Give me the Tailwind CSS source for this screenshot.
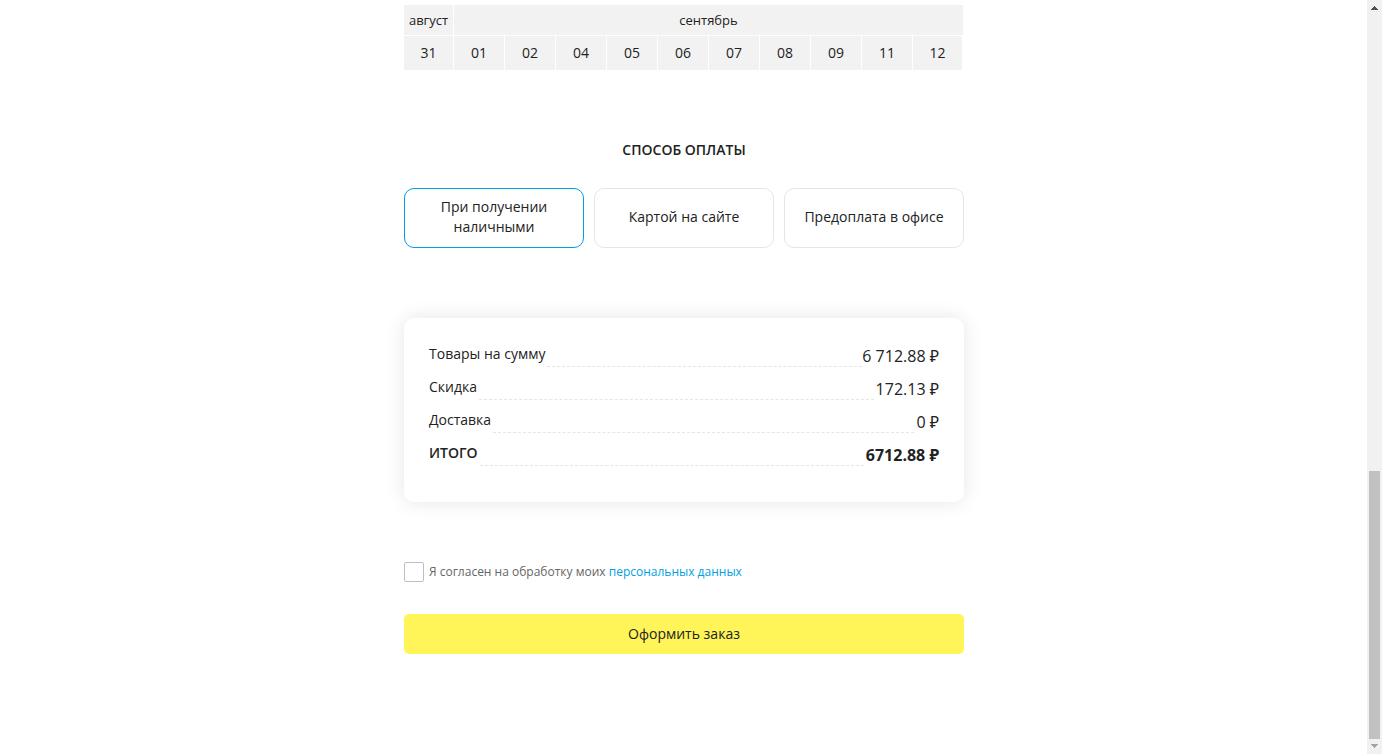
<!DOCTYPE html>
<html lang="ru">
<head>
<meta charset="utf-8">
<meta name="viewport" content="width=device-width, initial-scale=1">
<title>Оформление заказа</title>
<script src="https://cdn.jsdelivr.net/npm/@tailwindcss/browser@4"></script>
</head>
<body class="flex min-h-screen bg-white font-['Open_Sans','Noto_Sans',sans-serif] text-sm text-[#222]">
<main class="min-w-0 flex-1 pl-px">
<form class="mx-auto max-w-[560px] pt-[5px] pb-24">
  <table class="w-full table-fixed border-separate border-spacing-0 text-center">
    <colgroup><col class="w-[50px]"><col span="10"></colgroup>
    <thead>
      <tr class="h-[31px] text-[13px] leading-5">
        <th class="border-r border-b border-white bg-[#f2f2f2] p-0 font-normal">август</th>
        <th colspan="10" class="border-r border-b border-white bg-[#f2f2f2] p-0 font-normal">сентябрь</th>
      </tr>
    </thead>
    <tbody>
      <tr class="h-[34px]">
        <td class="border-r border-white bg-[#f2f2f2] p-0">31</td>
        <td class="border-r border-white bg-[#f2f2f2] p-0">01</td>
        <td class="border-r border-white bg-[#f2f2f2] p-0">02</td>
        <td class="border-r border-white bg-[#f2f2f2] p-0">04</td>
        <td class="border-r border-white bg-[#f2f2f2] p-0">05</td>
        <td class="border-r border-white bg-[#f2f2f2] p-0">06</td>
        <td class="border-r border-white bg-[#f2f2f2] p-0">07</td>
        <td class="border-r border-white bg-[#f2f2f2] p-0">08</td>
        <td class="border-r border-white bg-[#f2f2f2] p-0">09</td>
        <td class="border-r border-white bg-[#f2f2f2] p-0">11</td>
        <td class="border-r-2 border-white bg-[#f2f2f2] p-0">12</td>
      </tr>
    </tbody>
  </table>

  <fieldset class="mt-[70px]">
    <legend class="w-full text-center leading-5 font-semibold uppercase">Способ оплаты</legend>
    <div class="grid grid-cols-3 gap-2.5 pt-7 text-center leading-5">
      <label class="flex h-[60px] cursor-pointer items-center justify-center rounded-[10px] border border-[#e5e5e5] px-4 pb-0.5 has-checked:border-[#009fe3]"><input type="radio" name="payment" class="sr-only" checked>При получении наличными</label>
      <label class="flex h-[60px] cursor-pointer items-center justify-center rounded-[10px] border border-[#e5e5e5] px-4 pb-0.5 has-checked:border-[#009fe3]"><input type="radio" name="payment" class="sr-only">Картой на сайте</label>
      <label class="flex h-[60px] cursor-pointer items-center justify-center rounded-[10px] border border-[#e5e5e5] px-4 pb-0.5 has-checked:border-[#009fe3]"><input type="radio" name="payment" class="sr-only">Предоплата в офисе</label>
    </div>
  </fieldset>

  <dl class="mt-[70px] flex flex-col gap-[9px] rounded-[10px] px-[25px] pt-[25px] pb-9 shadow-[0_0_20px_rgba(0,0,0,0.1)]">
    <div class="flex h-6"><dt class="leading-[22px]">Товары на сумму</dt><dd class="order-last text-base leading-[26px]">6 712.88 ₽</dd><span class="ml-0.5 flex-1 border-b border-dashed border-[#e5e5e5]"></span></div>
    <div class="flex h-6"><dt class="leading-[22px]">Скидка</dt><dd class="order-last text-base leading-[26px]">172.13 ₽</dd><span class="mx-0.5 flex-1 border-b border-dashed border-[#e5e5e5]"></span></div>
    <div class="flex h-6"><dt class="leading-[22px]">Доставка</dt><dd class="order-last text-base leading-[26px]">0 ₽</dd><span class="mx-0.5 flex-1 border-b border-dashed border-[#e5e5e5]"></span></div>
    <div class="flex h-6"><dt class="leading-[22px] font-semibold">ИТОГО</dt><dd class="order-last text-base leading-[26px] font-bold">6712.88 ₽</dd><span class="mx-0.5 flex-1 border-b border-dashed border-[#e5e5e5]"></span></div>
  </dl>

  <div class="mt-[60px] flex items-center gap-[5px] text-xs leading-5 text-[#666]">
    <input id="agree" type="checkbox" class="size-5 appearance-none rounded-xs border border-[#bfbfbf] bg-white checked:bg-[#009fe3]">
    <p><label for="agree">Я согласен на обработку моих</label> <a href="#" class="text-[#009fe3]">персональных данных</a></p>
  </div>

  <button type="submit" class="mt-8 h-10 w-full rounded-[5px] bg-[#fff559]">Оформить заказ</button>
</form>
</main>

<!-- Scroll track -->
<div class="sticky top-0 flex h-screen w-[15px] flex-col items-center bg-[#f1f1f1]" aria-hidden="true">
  <svg class="h-[15px] w-[15px] shrink-0" viewBox="0 0 15 15" fill="#505050" shape-rendering="crispEdges"><path d="M7 6h1v1h1v1h1v1h1v1H4V9h1V8h1V7h1z"/></svg>
  <div class="grow-[456]"></div>
  <div class="w-[11px] grow-[268] bg-[#c1c1c1]"></div>
  <svg class="h-[15px] w-[15px] shrink-0" viewBox="0 0 15 15" fill="#a3a3a3" shape-rendering="crispEdges"><path d="M7 9h1V8h1V7h1V6h1V5H4v1h1v1h1v1h1z"/></svg>
</div>
</body>
</html>
